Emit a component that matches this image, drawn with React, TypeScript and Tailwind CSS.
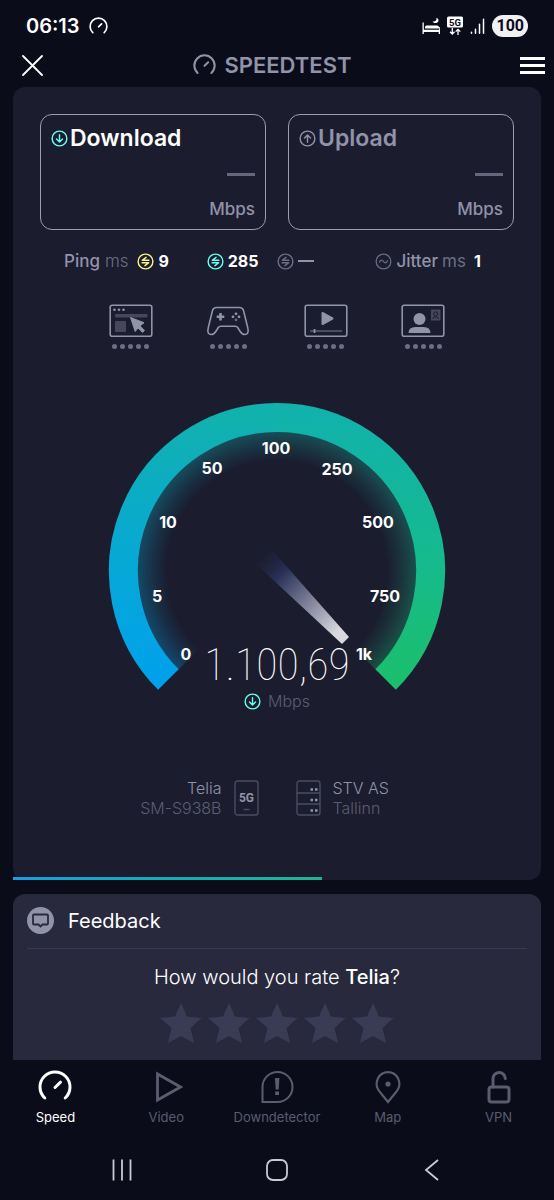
import type { ReactNode } from 'react';

type IconProps = { className?: string };

function SpeedIcon({ className, stroke = 3 }: IconProps & { stroke?: number }) {
  return (
    <svg viewBox="0 0 34 34" className={className} fill="none" stroke="currentColor" strokeWidth={stroke} strokeLinecap="round" aria-hidden="true">
      <path d="M6.8 28A15 15 0 1 1 27.2 28" />
      <path d="M17 17.5l5.5-5.3" />
    </svg>
  );
}

function ArrowCircle({ className, up = false }: IconProps & { up?: boolean }) {
  return (
    <svg viewBox="0 0 18 18" className={className} fill="none" stroke="currentColor" strokeWidth="1.5" strokeLinecap="round" strokeLinejoin="round" aria-hidden="true">
      <circle cx="9" cy="9" r="7.8" />
      <path d={up ? 'M9 13V5.3M5.8 8.4L9 5.2l3.2 3.2' : 'M9 5v7.7M5.8 9.6L9 12.8l3.2-3.2'} />
    </svg>
  );
}

function PingIcon({ className }: IconProps) {
  return (
    <svg viewBox="0 0 18 18" className={className} fill="none" stroke="currentColor" strokeWidth="1.5" strokeLinecap="round" strokeLinejoin="round" aria-hidden="true">
      <circle cx="9" cy="9" r="7.8" />
      <path d="M12.6 7.700H5.600L9.600 4.600M5.400 10.300h7l-4 3.100" />
    </svg>
  );
}

function JitterIcon({ className }: IconProps) {
  return (
    <svg viewBox="0 0 18 18" className={className} fill="none" stroke="currentColor" strokeWidth="1.3" strokeLinecap="round" aria-hidden="true">
      <circle cx="9" cy="9" r="7.8" />
      <path d="M4.8 9.8c1.1-2.9 3-2.7 4.2-.8s3.1 2.1 4.2-.8" />
    </svg>
  );
}

function StatusBar() {
  return (
    <div className="flex h-[52px] items-center justify-between px-[26px]">
      <div className="flex items-center gap-[9px]">
        <span className="text-[20px] font-semibold leading-6">06:13</span>
        <SpeedIcon className="size-[19px]" />
      </div>
      <div className="flex items-center gap-[6px]">
        <svg viewBox="0 0 18 18" className="size-[18px]" fill="currentColor" aria-hidden="true">
          <path d="M.5 5.500h1.300v7.200h15.400V10h.8v7h-1.300v-2H1.800v2H.5z" />
          <path d="M3 11.600V10q0-1.500 1.500-1.500H15q2 0 2 2v1.100z" />
          <path d="M14.400 1c.6 2.400-1.200 4-3.800 3.500 1.300 2.600 6 1.800 5.900-1.300 0-1-.9-1.900-2.100-2.200z" />
        </svg>
        <svg viewBox="0 0 18 20" className="h-5 w-[18px]" aria-hidden="true">
          <rect x="1" y="0.500" width="16" height="11" rx="1.500" fill="#fff" />
          <text x="9" y="9.500" textAnchor="middle" fontSize="9.500" fontWeight="700" fontFamily="Roboto" fill="#0a0c1a">5G</text>
          <path d="M6.300 12v6M4 15.800l2.300 2.300 2.300-2.300M12 19v-5.500M9.700 15.600l2.300-2.300 2.300 2.300" fill="none" stroke="#fff" strokeWidth="1.300" />
        </svg>
        <svg viewBox="0 0 16 18" className="h-[18px] w-4" stroke="currentColor" strokeWidth="1.500" strokeLinecap="round" aria-hidden="true">
          <path d="M1.500 15.200v1M5.500 12.200v4M9.500 7.200v9M13.500 2.200v14" />
        </svg>
        <span className="rounded-full bg-[#f1f1f4] px-1 font-[Roboto,sans-serif] text-[16px] font-bold leading-[22px] text-[#0a0c1a]">100</span>
      </div>
    </div>
  );
}

function Header() {
  return (
    <header className="mb-[9px] grid h-[26px] grid-cols-[1fr_auto_1fr] items-center pr-[9px]">
      <button type="button" aria-label="Close" className="ml-[22px] w-[21px]">
        <svg viewBox="0 0 21 21" className="size-[21px]" stroke="currentColor" strokeWidth="1.800" strokeLinecap="round" aria-hidden="true">
          <path d="M1 1l19 19M20 1L1 20" />
        </svg>
      </button>
      <h1 className="flex items-center gap-2 text-[22px] font-semibold leading-[26px] text-[#9193a8]">
        <SpeedIcon className="size-[23px]" />
        SPEEDTEST
      </h1>
      <button type="button" aria-label="Menu" className="flex w-[25px] flex-col gap-1 justify-self-end">
        <span className="h-[3px] w-full bg-white" />
        <span className="h-[3px] w-full bg-white" />
        <span className="h-[3px] w-full bg-white" />
      </button>
    </header>
  );
}

function ResultCard({ title, icon, active = false }: { title: string; icon: ReactNode; active?: boolean }) {
  return (
    <div className="flex flex-col rounded-xl border border-[#9c9db1] px-[10px] pb-[10px] pt-[10px]">
      <div className={`flex items-center gap-[2px] text-[23px] font-semibold leading-[26px] ${active ? 'text-white' : 'text-[#9193a8]'}`}>
        {icon}
        {title}
      </div>
      <span className="mt-[22px] h-[3px] w-7 self-end bg-[#66677c]" />
      <span className="mt-[23px] self-end text-[17px] font-medium leading-5 text-[#9193a8]">Mbps</span>
    </div>
  );
}

function PingRow() {
  return (
    <div className="mt-[21px] grid grid-cols-[142fr_70fr_98fr_114fr] px-6 text-[17px] leading-5">
      <div className="flex items-center gap-[5px]">
        <span className="font-medium text-[#9193a8]">Ping</span>
        <span className="font-light text-[#6d6e83]">ms</span>
        <PingIcon className="ml-[3px] size-[17px] text-[#fff38e]" />
        <span className="text-[16px] font-bold">9</span>
      </div>
      <div className="flex items-center gap-1">
        <PingIcon className="size-[17px] text-[#6afff3]" />
        <span className="text-[16px] font-bold">285</span>
      </div>
      <div className="flex items-center gap-1">
        <PingIcon className="size-[17px] text-[#6d6e83]" />
        <span className="h-[2px] w-4 bg-[#9193a8]" />
      </div>
      <div className="flex items-center gap-1">
        <JitterIcon className="size-[17px] shrink-0 text-[#6d6e83]" />
        <span className="font-medium text-[#9193a8]">Jitter</span>
        <span className="font-normal text-[#6d6e83]">ms</span>
        <span className="ml-1 text-[16px] font-bold">1</span>
      </div>
    </div>
  );
}

const qualityIcons = [
  {
    key: 'browsing',
    art: (
      <>
        <rect x="1.200" y="1.200" width="41.600" height="31" rx="2" fill="none" stroke="#9193a8" strokeWidth="1.600" />
        <g fill="#9193a8">
          <circle cx="5.500" cy="5.800" r="1.300" />
          <circle cx="10" cy="5.800" r="1.300" />
          <circle cx="14.500" cy="5.800" r="1.300" />
        </g>
        <rect x="6" y="10" width="32.500" height="3.500" rx="1" fill="#46475c" />
        <rect x="6" y="17" width="11" height="11" rx="1" fill="#46475c" />
        <path d="M21.500 13.500l13.500 5.200-4 3.200 4.500 4.500-2 2-4.500-4.500-2.800 3.600z" fill="#9193a8" stroke="#9193a8" strokeLinejoin="round" />
      </>
    ),
  },
  {
    key: 'gaming',
    art: (
      <>
        <path
          d="M10.500 3.500h23c2.200 0 3.400 1 4 3l4.200 17c1.200 4.800-.2 7-3 7-2 0-3.200-1-4.500-3l-2.500-4q-.8-1.300-2.500-1.300H14.800q-1.700 0-2.500 1.300l-2.500 4c-1.300 2-2.500 3-4.500 3-2.800 0-4.200-2.200-3-7l4.200-17c.6-2 1.800-3 4-3z"
          fill="none" stroke="#9193a8" strokeWidth="1.600"
        />
        <path d="M14.500 9v7.500M10.700 12.800h7.600" stroke="#9193a8" strokeWidth="2.600" />
        <g fill="#9193a8">
          <circle cx="30" cy="9.800" r="1.400" />
          <circle cx="33" cy="12.800" r="1.400" />
          <circle cx="27" cy="12.800" r="1.400" />
          <circle cx="30" cy="15.800" r="1.400" fill="#6d6e83" />
        </g>
      </>
    ),
  },
  {
    key: 'streaming',
    art: (
      <>
        <rect x="1.200" y="1.200" width="41.600" height="31" rx="2" fill="none" stroke="#9193a8" strokeWidth="1.600" />
        <path d="M18.500 9v11l10-5.500z" fill="#9193a8" stroke="#9193a8" strokeWidth="2" strokeLinejoin="round" />
        <path d="M6 27h32" stroke="#5b5c72" strokeWidth="1.500" />
        <path d="M10.500 25v4" stroke="#9193a8" strokeWidth="1.800" />
      </>
    ),
  },
  {
    key: 'video-chat',
    art: (
      <>
        <rect x="1.200" y="1.200" width="41.600" height="31" rx="2" fill="none" stroke="#9193a8" strokeWidth="1.600" />
        <circle cx="18.500" cy="15" r="6" fill="#9193a8" />
        <path d="M7.500 29q0-6 7-6h8q7 0 7 6z" fill="#9193a8" />
        <rect x="30" y="5.500" width="9.500" height="11" fill="#46475c" />
        <circle cx="34.700" cy="10" r="2.100" fill="none" stroke="#1b1c2e" />
        <path d="M31.800 15q0-2 2.900-2t2.900 2" fill="none" stroke="#1b1c2e" />
      </>
    ),
  },
];

function QualityRow() {
  return (
    <div className="mt-[33px] grid grid-cols-4 px-[42px]">
      {qualityIcons.map((item) => (
        <div key={item.key} className="flex flex-col items-center">
          <svg viewBox="0 0 44 34" className="h-[34px] w-11" aria-hidden="true">
            {item.art}
          </svg>
          <div className="mt-[6px] flex gap-[3px]">
            {[0, 1, 2, 3, 4].map((dot) => (
              <span key={dot} className="size-[5px] rounded-full bg-[#6d6e83]" />
            ))}
          </div>
        </div>
      ))}
    </div>
  );
}

const ticks = [
  { label: '0', x: 78, y: 251 },
  { label: '5', x: 49, y: 193 },
  { label: '10', x: 60, y: 119 },
  { label: '50', x: 104, y: 65 },
  { label: '100', x: 168, y: 45 },
  { label: '250', x: 229, y: 66 },
  { label: '500', x: 270, y: 119 },
  { label: '750', x: 277, y: 193 },
  { label: '1k', x: 256, y: 251 },
];

function Gauge() {
  return (
    <div className="relative mt-[54px] flex justify-center">
      <svg viewBox="0 0 338 288" className="h-[288px] w-[338px]" role="img" aria-label="Speed gauge">
        <defs>
          <linearGradient id="arc-left" gradientUnits="userSpaceOnUse" x1="0" y1="287" x2="30" y2="0">
            <stop offset="0" stopColor="#009fee" />
            <stop offset="0.4" stopColor="#06a8d8" />
            <stop offset="0.8" stopColor="#0eaebd" />
            <stop offset="1" stopColor="#11b2ac" />
          </linearGradient>
          <linearGradient id="arc-right" gradientUnits="userSpaceOnUse" x1="308" y1="0" x2="338" y2="287">
            <stop offset="0" stopColor="#11b2ac" />
            <stop offset="0.5" stopColor="#15b990" />
            <stop offset="1" stopColor="#1bc069" />
          </linearGradient>
          <radialGradient id="glow-fade" gradientUnits="userSpaceOnUse" cx="169" cy="168" r="140">
            <stop offset="0.780" stopColor="#fff" stopOpacity="0" />
            <stop offset="0.880" stopColor="#fff" stopOpacity="0.140" />
            <stop offset="1" stopColor="#fff" stopOpacity="0.340" />
          </radialGradient>
          <mask id="glow" maskUnits="userSpaceOnUse" x="0" y="0" width="338" height="288">
            <rect width="338" height="288" fill="url(#glow-fade)" />
          </mask>
          <linearGradient id="needle" gradientUnits="userSpaceOnUse" x1="156" y1="154" x2="238" y2="238">
            <stop offset="0" stopColor="#1b2235" stopOpacity="0.500" />
            <stop offset="0.2" stopColor="#272f55" />
            <stop offset="0.6" stopColor="#8d8fa5" />
            <stop offset="0.9" stopColor="#dadade" />
          </linearGradient>
        </defs>
        <g mask="url(#glow)" fill="none" strokeWidth="38">
          <path d="M82.700 254.300A122 122 0 0 1 169 46" stroke="url(#arc-left)" />
          <path d="M169 46A122 122 0 0 1 255.300 254.300" stroke="url(#arc-right)" />
        </g>
        <g fill="none" strokeWidth="29">
          <path d="M60.400 276.600A153.500 153.500 0 0 1 169.500 14.500" stroke="url(#arc-left)" />
          <path d="M169 14.500A153.500 153.500 0 0 1 277.600 276.600" stroke="url(#arc-right)" />
        </g>
        <path d="M164 147l77 87-7 7-86-80z" fill="url(#needle)" />
        <g fill="#fff" fontSize="16" fontWeight="700" textAnchor="middle">
          {ticks.map((tick) => (
            <text key={tick.label} x={tick.x} y={tick.y + 6}>{tick.label}</text>
          ))}
        </g>
      </svg>
      <div className="absolute inset-x-0 top-[236px] flex flex-col items-center">
        <span className="font-['Roboto_Condensed',Roboto,sans-serif] text-[44px] font-thin leading-[52px]">1.100,69</span>
        <span className="flex items-center gap-[7px] text-[16px] font-light leading-5 text-[#5b5c72]">
          <ArrowCircle className="size-[17px] text-[#6afff3]" />
          Mbps
        </span>
      </div>
    </div>
  );
}

function ConnectionInfo() {
  return (
    <div className="mt-[87px] grid grid-cols-2 gap-[37px] text-[16px] font-light leading-5">
      <div className="flex items-center justify-end gap-3 text-right">
        <div>
          <p className="text-[#9193a8]">Telia</p>
          <p className="text-[#5b5c72]">SM-S938B</p>
        </div>
        <svg viewBox="0 0 25 36" className="h-9 w-[25px]" fill="none" aria-hidden="true">
          <rect x="1" y="1" width="23" height="34" rx="2.500" stroke="#4b4c62" strokeWidth="1.400" />
          <text x="12.500" y="22" textAnchor="middle" fontSize="12" fontWeight="700" fontFamily="Roboto" fill="#9193a8">5G</text>
          <path d="M9.500 29.500h6" stroke="#4b4c62" strokeWidth="1.400" />
        </svg>
      </div>
      <div className="flex items-center gap-3">
        <svg viewBox="0 0 25 36" className="h-9 w-[25px]" fill="none" aria-hidden="true">
          <rect x="1" y="1" width="23" height="34" rx="2.500" stroke="#4b4c62" strokeWidth="1.400" />
          <path d="M1 13h23M1 24h23" stroke="#4b4c62" strokeWidth="1.400" />
          <path d="M14.500 9.500h2.500m2 0h2.500M14.500 20h2.500m2 0h2.500M14.500 30.500h2.500m2 0h2.500" stroke="#9193a8" strokeWidth="2.500" />
        </svg>
        <div>
          <p className="text-[#9193a8]">STV AS</p>
          <p className="text-[#5b5c72]">Tallinn</p>
        </div>
      </div>
    </div>
  );
}

function Feedback() {
  return (
    <section className="mx-[13px] mt-[14px] rounded-t-xl bg-[#28293d] px-[14px] pb-4 pt-[13px]">
      <div className="flex items-center gap-[14px]">
        <svg viewBox="0 0 27 27" className="size-[27px]" aria-hidden="true">
          <circle cx="13.500" cy="13.500" r="13.500" fill="#9193a8" />
          <path d="M7 7.500h13q1 0 1 1v8q0 1-1 1h-4.500l-2 2-2-2H7q-1 0-1-1v-8q0-1 1-1z" fill="none" stroke="#28293d" strokeWidth="1.800" />
        </svg>
        <h2 className="text-[20px] leading-6">Feedback</h2>
      </div>
      <hr className="mt-[14px] border-[#3a3b50]" />
      <p className="mt-4 text-center text-[20px] font-light leading-6">
        How would you rate <span className="font-medium">Telia</span>?
      </p>
      <div className="mt-[13px] flex justify-center gap-[6px]">
        {[1, 2, 3, 4, 5].map((star) => (
          <button key={star} type="button" aria-label={`Rate ${star}`}>
            <svg viewBox="0 0 42 42" className="size-[42px]" fill="#3a3b55" aria-hidden="true">
              <path d="M21 1l6 13.500 14.500 1.500-11 10L34 41l-13-7-13 7 3.500-15-11-10L15 14.500z" />
            </svg>
          </button>
        ))}
      </div>
    </section>
  );
}

const tabs = [
  { label: 'Speed', icon: <SpeedIcon className="size-[34px]" /> },
  {
    label: 'Video',
    icon: (
      <svg viewBox="0 0 34 34" className="size-[34px]" fill="none" stroke="currentColor" strokeWidth="2.800" aria-hidden="true">
        <path d="M8.500 4v26L31.500 17z" />
      </svg>
    ),
  },
  {
    label: 'Downdetector',
    icon: (
      <svg viewBox="0 0 34 34" className="size-[34px]" fill="none" stroke="currentColor" strokeWidth="2" aria-hidden="true">
        <path d="M2.500 32V17a15 15 0 1 1 15 15z" />
        <path d="M15 8h4.400l-.7 11.500h-3zM15.200 21.500h3.800v3.500h-3.800z" fill="currentColor" stroke="none" />
      </svg>
    ),
  },
  {
    label: 'Map',
    icon: (
      <svg viewBox="0 0 34 34" className="size-[34px]" fill="none" stroke="currentColor" strokeWidth="2.200" aria-hidden="true">
        <path d="M17 32L8.200 21.200C2 12.500 8 2.200 17 2.200S32 12.500 25.800 21.200z" />
        <circle cx="17" cy="14" r="2.600" fill="currentColor" stroke="none" />
      </svg>
    ),
  },
  {
    label: 'VPN',
    icon: (
      <svg viewBox="0 0 34 34" className="size-[34px]" fill="none" stroke="currentColor" strokeWidth="3" strokeLinecap="round" aria-hidden="true">
        <rect x="7" y="17" width="20" height="15" rx="2.500" />
        <path d="M11 17V9a6 6 0 0 1 12.300-.5" />
      </svg>
    ),
  },
];

function TabBar() {
  return (
    <nav className="grid h-20 grid-cols-5 pt-[10px]">
      {tabs.map((tab, index) => (
        <button key={tab.label} type="button" className={`flex flex-col items-center text-[13px] leading-4 ${index === 0 ? 'text-white' : 'text-[#5b5c70]'}`}>
          {tab.icon}
          <span className="mt-[5px]">{tab.label}</span>
        </button>
      ))}
    </nav>
  );
}

function SystemNav() {
  return (
    <div className="grid h-[60px] grid-cols-3 place-items-center px-11 text-[#c9cad2]">
      <button type="button" aria-label="Recent apps">
        <svg viewBox="0 0 24 24" className="size-6" stroke="currentColor" strokeWidth="1.800" aria-hidden="true">
          <path d="M3.500 1.500v21M12 1.500v21M20.500 1.500v21" />
        </svg>
      </button>
      <button type="button" aria-label="Home">
        <svg viewBox="0 0 24 24" className="size-6" fill="none" stroke="currentColor" strokeWidth="1.800" aria-hidden="true">
          <rect x="2" y="2" width="20" height="20" rx="6" />
        </svg>
      </button>
      <button type="button" aria-label="Back">
        <svg viewBox="0 0 24 24" className="size-6" fill="none" stroke="currentColor" strokeWidth="1.800" aria-hidden="true">
          <path d="M18 2L6 12l12 10" />
        </svg>
      </button>
    </div>
  );
}

export default function App() {
  return (
    <div className="flex min-h-screen flex-col bg-[#0a0c1a] font-[Inter,sans-serif] text-white">
      <StatusBar />
      <Header />
      <main>
        <section className="mx-[13px] rounded-xl bg-[#1b1c2e]">
          <div className="px-[27px] pb-[59px] pt-[27px]">
            <div className="grid grid-cols-2 gap-[22px]">
              <ResultCard title="Download" icon={<ArrowCircle className="size-[17px] text-[#6afff3]" />} active />
              <ResultCard title="Upload" icon={<ArrowCircle up className="size-[17px]" />} />
            </div>
            <PingRow />
            <QualityRow />
            <Gauge />
            <ConnectionInfo />
          </div>
          <div className="h-[3px] w-[58.5%] bg-linear-to-r from-[#1a9fe0] to-[#20b592]" />
        </section>
        <Feedback />
      </main>
      <TabBar />
      <SystemNav />
    </div>
  );
}
